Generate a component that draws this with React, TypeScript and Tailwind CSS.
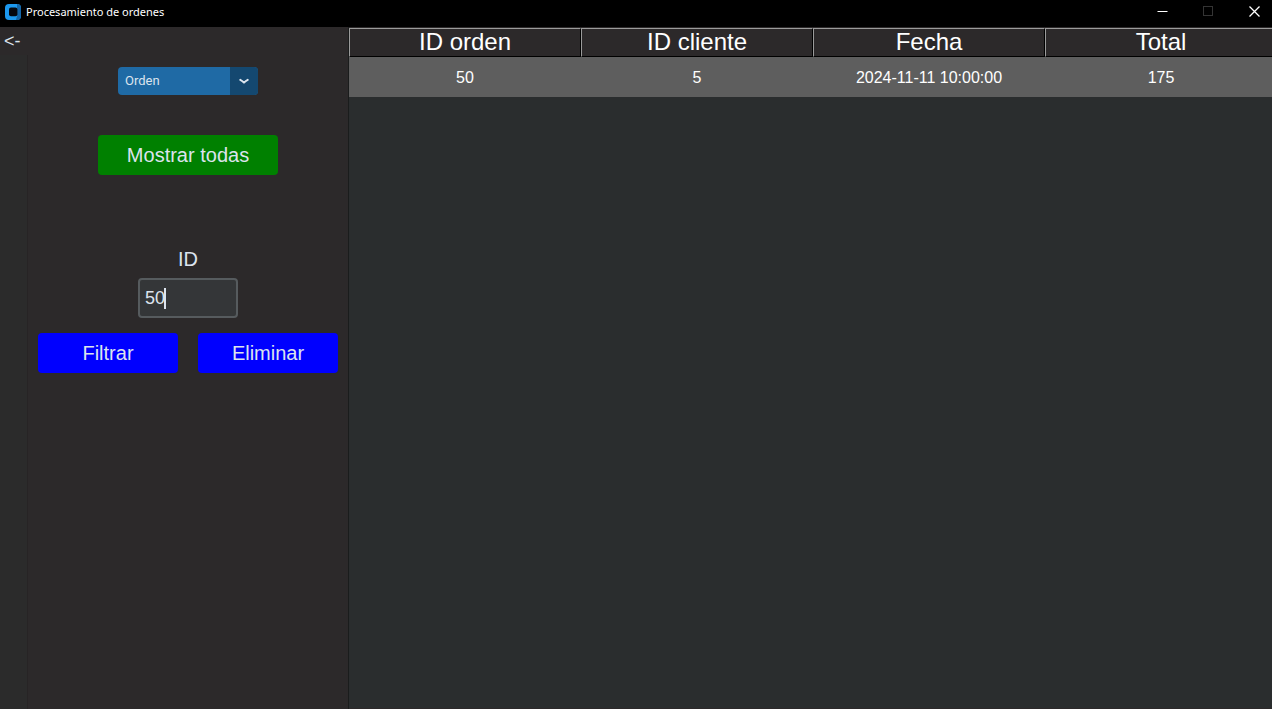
import { useState } from "react";

const columns = ["ID orden", "ID cliente", "Fecha", "Total"];

const orders = [
  { id: "50", client: "5", date: "2024-11-11 10:00:00", total: "175" },
];

function AppLogo() {
  return (
    <svg className="size-4" viewBox="0 0 16 16" aria-hidden="true">
      <rect width="16" height="16" rx="4" fill="#1c98ee" />
      <path d="M12 0A4 4 0 0 1 16 4V12A4 4 0 0 1 12 16H11L12 12Z" fill="#1566a8" />
      <rect x="4" y="3.6" width="8.4" height="8.6" rx="2" fill="#05080f" />
    </svg>
  );
}

function TitleBar() {
  return (
    <header className="flex h-[27px] shrink-0 items-start justify-between bg-black text-white">
      <div className="flex h-6 items-center gap-[5px] pl-[5px]">
        <AppLogo />
        <h1 className="font-['Noto_Sans',sans-serif] text-[11px] leading-4">
          Procesamiento de ordenes
        </h1>
      </div>
      <div className="flex h-[23px] gap-[35px] pr-3">
        <button aria-label="Minimizar" className="flex items-center">
          <svg className="size-[11px]" viewBox="0 0 11 11" stroke="#ffffff">
            <path d="M0.5 5.5H10.5" />
          </svg>
        </button>
        <button aria-label="Maximizar" disabled className="flex items-center">
          <svg className="size-[11px]" viewBox="0 0 11 11" fill="none" stroke="#343434">
            <rect x="0.5" y="0.5" width="9" height="9" />
          </svg>
        </button>
        <button aria-label="Cerrar" className="flex items-center">
          <svg className="size-[11px]" viewBox="0 0 11 11" stroke="#ffffff" strokeWidth="1.3">
            <path d="M0.5 0.5L10.5 10.5M10.5 0.5L0.5 10.5" />
          </svg>
        </button>
      </div>
    </header>
  );
}

function TypeSelect() {
  return (
    <div className="relative flex h-7 w-[140px] overflow-hidden rounded bg-[#1f6aa5]">
      <select
        aria-label="Tipo"
        className="w-full appearance-none bg-transparent pr-8 pl-[7px] font-[Roboto,sans-serif] text-[13px] text-[#dce4ee] outline-none"
      >
        <option>Orden</option>
      </select>
      <span className="pointer-events-none absolute inset-y-0 right-0 flex w-7 items-center justify-center bg-[#144870]">
        <svg className="h-1.5 w-2.5" viewBox="0 0 10 6" fill="none" stroke="#dce4ee" strokeWidth="2" strokeLinecap="round" strokeLinejoin="round">
          <path d="M1.3 1.8C2.6 2.4 3.6 3.2 5 4.6C6.4 3.2 7.4 2.4 8.7 1.8" />
        </svg>
      </span>
    </div>
  );
}

function FilterPanel() {
  const [id, setId] = useState("50");
  return (
    <aside className="flex w-[349px] shrink-0 flex-col border-r border-[#1a1c1c] bg-[#2c292a] text-[#dce4ee]">
      <div className="flex h-7 shrink-0 items-center pl-1">
        <button aria-label="Volver" className="text-lg">
          {"<-"}
        </button>
      </div>
      <div className="flex grow">
        <div className="w-7 shrink-0 border-r border-[#272425] bg-[#2b2b2b]" />
        <form className="flex grow flex-col items-center px-2.5 pt-3 text-xl" onSubmit={(e) => e.preventDefault()}>
          <TypeSelect />
          <button type="button" className="mt-10 h-10 w-[180px] rounded bg-[#008000]">
            Mostrar todas
          </button>
          <label htmlFor="order-id" className="mt-[70px] leading-7">
            ID
          </label>
          <div className="relative mt-[5px] h-10 w-[100px]">
            <input
              id="order-id"
              value={id}
              onChange={(e) => setId(e.target.value)}
              className="size-full rounded border-2 border-[#565b5e] bg-[#343638] px-[5px] text-lg text-[#dce4ee] caret-transparent outline-none"
            />
            <span className="pointer-events-none absolute inset-y-0 left-[7px] flex items-center text-lg" aria-hidden="true">
              <span className="invisible">{id}</span>
              <span className="-ml-px h-[21px] w-0.5 bg-[#dce4ee]" />
            </span>
          </div>
          <div className="mt-[15px] flex w-full gap-5">
            <button type="submit" className="h-10 flex-1 rounded bg-[#0000ff]">
              Filtrar
            </button>
            <button type="button" className="h-10 flex-1 rounded bg-[#0000ff]">
              Eliminar
            </button>
          </div>
        </form>
      </div>
    </aside>
  );
}

function OrdersTable() {
  return (
    <main className="min-w-0 grow overflow-hidden border-y border-[#2c292a] bg-[#2a2d2e] text-white">
      <table className="w-[calc(100%+5px)] table-fixed border-separate border-spacing-0 text-center">
        <thead>
          <tr>
            {columns.map((name) => (
              <th
                key={name}
                scope="col"
                className="h-[29px] border border-t-[#9b9b9b] border-r-black border-b-black border-l-[#9b9b9b] bg-[#2c292a] p-0 pb-0.5 text-2xl leading-[25px] font-normal"
              >
                {name}
              </th>
            ))}
          </tr>
        </thead>
        <tbody>
          {orders.map((order) => (
            <tr key={order.id} className="h-10 bg-[#5e5e5e] text-base *:pt-0.5">
              <td>{order.id}</td>
              <td>{order.client}</td>
              <td>{order.date}</td>
              <td>{order.total}</td>
            </tr>
          ))}
        </tbody>
      </table>
    </main>
  );
}

export default function App() {
  return (
    <div className="flex h-screen flex-col overflow-hidden bg-[#2c292a] font-['Liberation_Sans',Arial,sans-serif]">
      <TitleBar />
      <div className="flex min-h-0 grow">
        <FilterPanel />
        <OrdersTable />
      </div>
    </div>
  );
}
